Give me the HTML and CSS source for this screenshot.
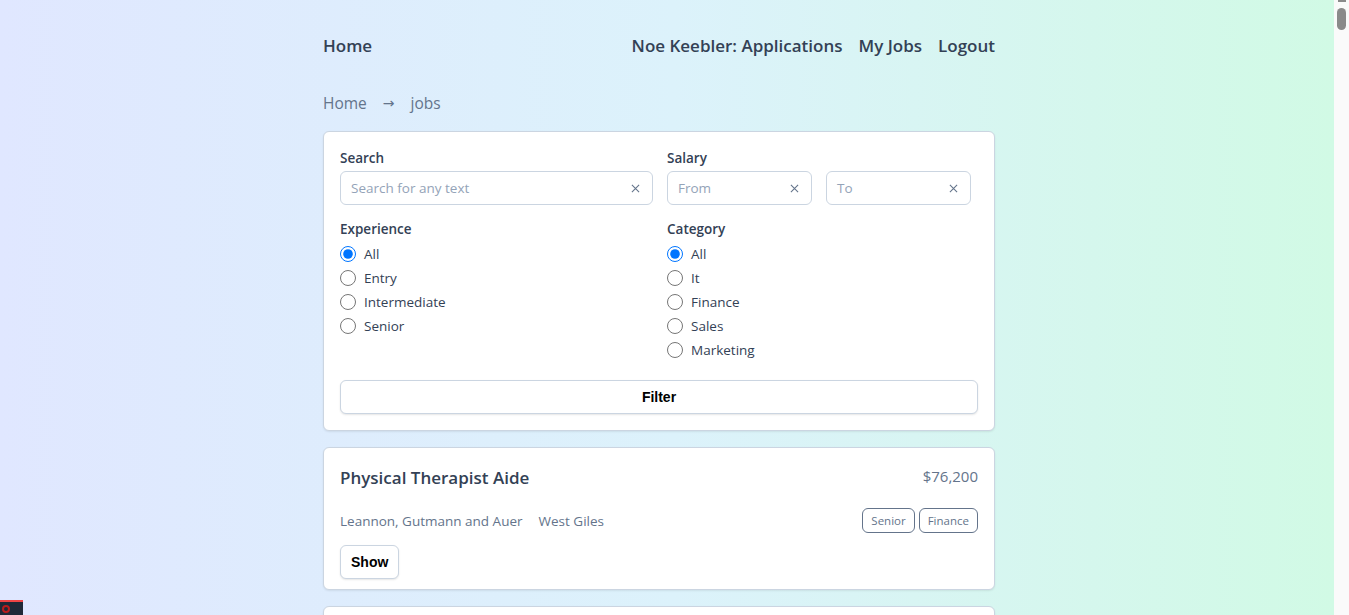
FILE: index.html
```html
<!DOCTYPE html>
<html lang="en">
<head>
<meta charset="utf-8">
<title>Jobs</title>
<link rel="stylesheet" href="styles.css">
</head>
<body>
<div class="page">
  <div class="container">
    <nav class="nav">
      <a class="nav-link" href="#">Home</a>
      <div class="nav-right">
        <a class="nav-link" href="#">Noe Keebler: Applications</a>
        <a class="nav-link" href="#">My Jobs</a>
        <a class="nav-link" href="#">Logout</a>
      </div>
    </nav>

    <ul class="crumbs">
      <li><a href="#">Home</a></li>
      <li class="arrow">→</li>
      <li>jobs</li>
    </ul>

    <section class="card filter-card">
      <div class="grid">
        <div>
          <div class="label">Search</div>
          <div class="input">
            <span class="ph">Search for any text</span>
            <svg class="x" viewBox="0 0 10 10"><path d="M1 1L9 9M9 1L1 9"/></svg>
          </div>
        </div>
        <div>
          <div class="label">Salary</div>
          <div class="pair">
            <div class="input small"><span class="ph">From</span><svg class="x" viewBox="0 0 10 10"><path d="M1 1L9 9M9 1L1 9"/></svg></div>
            <div class="input small"><span class="ph">To</span><svg class="x" viewBox="0 0 10 10"><path d="M1 1L9 9M9 1L1 9"/></svg></div>
          </div>
        </div>
        <div>
          <div class="label">Experience</div>
          <label class="radio"><input type="radio" name="exp" checked><span>All</span></label>
          <label class="radio"><input type="radio" name="exp"><span>Entry</span></label>
          <label class="radio"><input type="radio" name="exp"><span>Intermediate</span></label>
          <label class="radio"><input type="radio" name="exp"><span>Senior</span></label>
        </div>
        <div>
          <div class="label">Category</div>
          <label class="radio"><input type="radio" name="cat" checked><span>All</span></label>
          <label class="radio"><input type="radio" name="cat"><span>It</span></label>
          <label class="radio"><input type="radio" name="cat"><span>Finance</span></label>
          <label class="radio"><input type="radio" name="cat"><span>Sales</span></label>
          <label class="radio"><input type="radio" name="cat"><span>Marketing</span></label>
        </div>
      </div>
      <button class="btn btn-full">Filter</button>
    </section>

    <section class="card job">
      <div class="job-top">
        <h2 class="job-title">Physical Therapist Aide</h2>
        <div class="salary">$76,200</div>
      </div>
      <div class="job-meta">
        <div class="meta-left"><span>Leannon, Gutmann and Auer</span><span>West Giles</span></div>
        <div class="tags"><span class="tag">Senior</span><span class="tag">Finance</span></div>
      </div>
      <button class="btn">Show</button>
    </section>

    <section class="card job">
      <div class="job-top">
        <h2 class="job-title">Software Developer</h2>
        <div class="salary">$98,400</div>
      </div>
      <div class="job-meta">
        <div class="meta-left"><span>Kuhn Group</span><span>Port Ellie</span></div>
        <div class="tags"><span class="tag">Entry</span><span class="tag">It</span></div>
      </div>
      <button class="btn">Show</button>
    </section>
  </div>
</div>
<div class="scrollbar"><span class="sb-arrow"></span><span class="sb-thumb"></span></div>
<div class="debug-badge"><span class="debug-icon"></span></div>
</body>
</html>
```

FILE: styles.css
```css
* { box-sizing: border-box; }
html, body { margin: 0; padding: 0; }
body {
  font-family: "Open Sans", "Noto Sans", sans-serif;
  color: #334155;
  background: linear-gradient(to right, #e0e7ff, #dcf2fb 50%, #d1fae5 calc(100% - 15px), #fafafa calc(100% - 15px));
  min-height: 100vh;
  padding-right: 15px;
}
.page { padding: 32px 16px 40px 0; }
.container { width: 672px; margin: 0 auto; }
a { color: inherit; text-decoration: none; }

.nav { display: flex; justify-content: space-between; align-items: center; height: 28px; margin-bottom: 31px; }
.nav-right { display: flex; gap: 16px; }
.nav-link { font-size: 17px; font-weight: 600; color: #334155; line-height: 28px; }

.crumbs { list-style: none; margin: 0 0 16px; padding: 0; display: flex; gap: 16px; color: #64748b; font-size: 15.5px; line-height: 24px; }
.crumbs .arrow { font-family: "DejaVu Sans", sans-serif; font-size: 14px; }

.card {
  background: #fff;
  border: 1px solid #cbd5e1;
  border-radius: 6px;
  box-shadow: 0 1px 2px rgba(0,0,0,0.08);
  padding: 16px;
  margin-bottom: 16px;
}

.grid { display: grid; grid-template-columns: 1fr 1fr; column-gap: 16px; row-gap: 14px; }
.label { font-size: 13.5px; font-weight: 600; line-height: 20px; margin-bottom: 3px; color: #334155; }

.input {
  height: 34px;
  border: 1px solid #cbd5e1;
  border-radius: 6px;
  display: flex;
  align-items: center;
  justify-content: space-between;
  padding: 0 12px 0 10px;
  margin-right: -2px;
}
.input.small { width: 145px; margin-right: 0; }
.pair { display: flex; gap: 14px; }
.ph { font-size: 13.5px; color: #94a3b8; }
.x { width: 9px; height: 9px; stroke: #64748b; stroke-width: 1.2; fill: none; }

.radio { display: flex; align-items: center; height: 24px; font-size: 13.5px; color: #334155; }
.radio input { width: 16px; height: 16px; margin: 0 8px 0 0; }

.btn {
  font-family: "Liberation Sans", Arial, sans-serif;
  font-weight: 700;
  font-size: 14px;
  color: #000;
  background: #fff;
  border: 1px solid #cbd5e1;
  border-radius: 6px;
  box-shadow: 0 1px 2px rgba(0,0,0,0.1);
  height: 34px;
  padding: 0 10px;
}
.btn-full { width: 100%; margin-top: 18px; display: block; }

.job { padding: 16px 16px 10px; }
.job-top { display: flex; justify-content: space-between; align-items: flex-start; }
.job-title { margin: 0; font-size: 17px; font-weight: 600; line-height: 28px; color: #334155; }
.salary { color: #64748b; font-size: 15px; line-height: 24px; }
.job-meta { display: flex; justify-content: space-between; align-items: center; margin-top: 16px; }
.meta-left { display: flex; gap: 16px; font-size: 13.5px; color: #64748b; }
.tags { display: flex; gap: 4px; }
.tag { border: 1px solid #64748b; border-radius: 6px; font-size: 11.5px; color: #64748b; height: 25px; line-height: 23px; padding: 0 8px; }
.job .btn { margin-top: 12px; }

.scrollbar {
  position: fixed;
  top: 0;
  right: 0;
  width: 15px;
  height: 100vh;
  background: #fafafa;
}
.sb-arrow { display: block; width: 8px; height: 2px; margin: 0 auto; background: #8a8a8a; }
.sb-thumb { display: block; width: 9px; height: 22px; margin: 6px auto 0; border-radius: 5px; background: #8a8a8a; }

.debug-badge {
  position: fixed;
  left: 0;
  bottom: 0;
  width: 23px;
  height: 15px;
  background: #1f2937;
  border-top: 2px solid #ef4444;
}
.debug-icon { display: block; width: 8px; height: 8px; margin: 3px 0 0 2px; border: 2px solid #b91c1c; border-radius: 50%; }
```
